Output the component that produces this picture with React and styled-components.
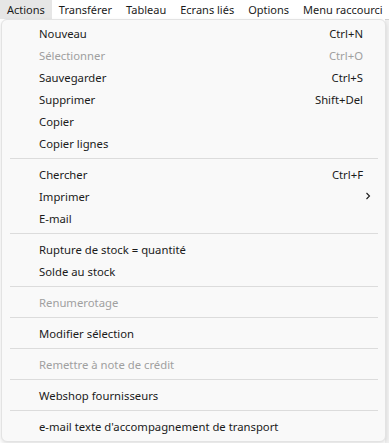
import React from 'react';
import styled, { createGlobalStyle } from 'styled-components';

const GlobalStyle = createGlobalStyle`
    html, body {
        margin: 0;
        padding: 0;
        background: #ffffff;
        font-family: "Noto Sans", "Liberation Sans", sans-serif;
        font-size: 11.3px;
        color: #1b1b1b;
    }
`;

const Screen = styled.div`
    position: relative;
    width: 389px;
    height: 443px;
    overflow: hidden;
    background: #ffffff;
`;

const MenuBar = styled.div`
    display: flex;
    height: 19px;
    white-space: nowrap;
    font-size: 11px;
`;

const BarItem = styled.div`
    flex-shrink: 0;
    padding: 0 7px;
    line-height: 19px;
    background: ${(p) => (p.open ? '#e6e6e6' : 'transparent')};
`;

const Backdrop = styled.div`
    position: absolute;
    top: 19px;
    right: 0;
    width: 4px;
    bottom: 0;
    background: #f0f0f0;
    border-top: 1px solid #d0d0d0;
`;

const Dropdown = styled.div`
    position: absolute;
    top: 19px;
    left: 1px;
    width: 383px;
    padding: 2px 0 4px;
    background: #f9f9f9;
    border: 1px solid #e3e3e3;
    border-radius: 6px;
    box-shadow: 0 2px 4px rgba(0, 0, 0, 0.12);
`;

const Item = styled.div`
    display: flex;
    align-items: center;
    height: 22px;
    padding: 0 22px 0 37px;
    color: ${(p) => (p.disabled ? '#a0a0a0' : '#1b1b1b')};
    white-space: nowrap;
`;

const Label = styled.span`
    flex: 1;
`;

const Shortcut = styled.span``;

const Chevron = styled.svg`
    width: 8px;
    height: 8px;
    margin-right: -9px;
`;

const Separator = styled.div`
    height: 1px;
    margin: 4px 7px 4px 8px;
    background: #dcdcdc;
`;

const groups = [
    [
        { label: 'Nouveau', key: 'Ctrl+N' },
        { label: 'Sélectionner', key: 'Ctrl+O', disabled: true },
        { label: 'Sauvegarder', key: 'Ctrl+S' },
        { label: 'Supprimer', key: 'Shift+Del' },
        { label: 'Copier' },
        { label: 'Copier lignes' },
    ],
    [
        { label: 'Chercher', key: 'Ctrl+F' },
        { label: 'Imprimer', sub: true },
        { label: 'E-mail' },
    ],
    [
        { label: 'Rupture de stock = quantité' },
        { label: 'Solde au stock' },
    ],
    [{ label: 'Renumerotage', disabled: true }],
    [{ label: 'Modifier sélection' }],
    [{ label: 'Remettre à note de crédit', disabled: true }],
    [{ label: 'Webshop fournisseurs' }],
    [{ label: "e-mail texte d'accompagnement de transport" }],
];

const barItems = ['Actions', 'Transférer', 'Tableau', 'Ecrans liés', 'Options', 'Menu raccourci'];

export default function App() {
    return (
        <Screen>
            <GlobalStyle />
            <MenuBar>
                {barItems.map((name, i) => (
                    <BarItem key={name} open={i === 0}>{name}</BarItem>
                ))}
            </MenuBar>
            <Backdrop />
            <Dropdown>
                {groups.map((group, gi) => (
                    <React.Fragment key={gi}>
                        {gi > 0 && <Separator />}
                        {group.map((it) => (
                            <Item key={it.label} disabled={it.disabled}>
                                <Label>{it.label}</Label>
                                {it.key && <Shortcut>{it.key}</Shortcut>}
                                {it.sub && (
                                    <Chevron viewBox="0 0 8 8">
                                        <path d="M2.5 1 L5.5 4 L2.5 7" fill="none" stroke="#1b1b1b" strokeWidth="1.1" />
                                    </Chevron>
                                )}
                            </Item>
                        ))}
                    </React.Fragment>
                ))}
            </Dropdown>
        </Screen>
    );
}
